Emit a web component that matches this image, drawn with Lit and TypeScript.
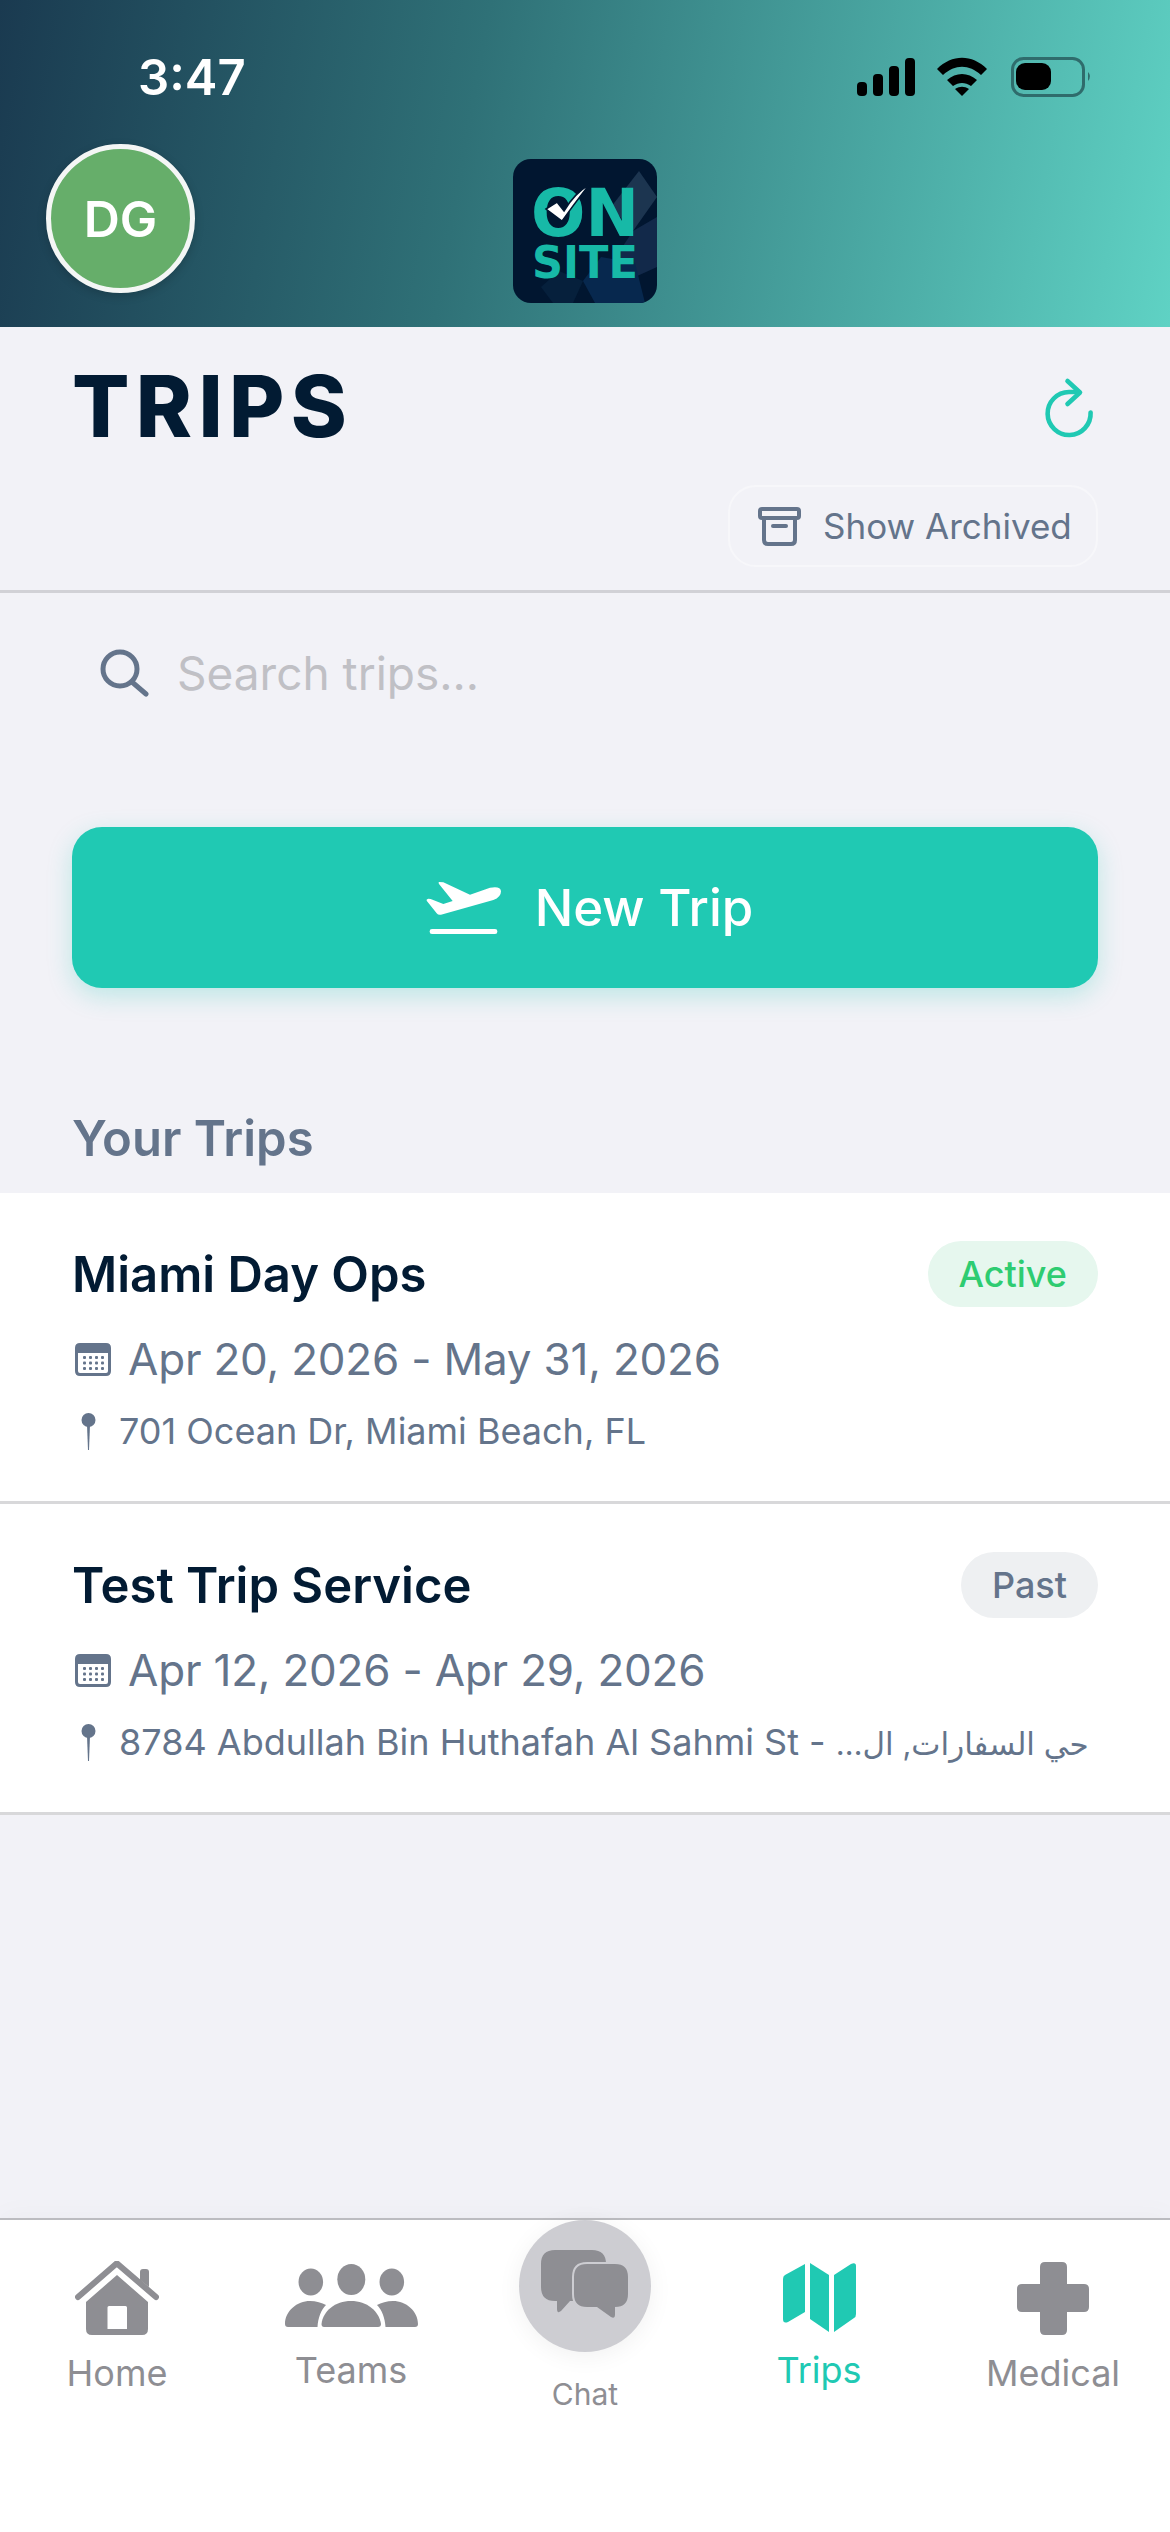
import { LitElement, html, css, svg } from "lit";
import { customElement } from "lit/decorators.js";

const TRIPS = [
  {
    name: "Miami Day Ops",
    status: "Active",
    dates: "Apr 20, 2026 - May 31, 2026",
    address: html`701 Ocean Dr, Miami Beach, FL`,
  },
  {
    name: "Test Trip Service",
    status: "Past",
    dates: "Apr 12, 2026 - Apr 29, 2026",
    address: html`8784 Abdullah Bin Huthafah Al Sahmi St - <span dir="rtl" class="rtl">حي السفارات, ال…</span>`,
  },
];

const ICONS = {
  home: svg`<svg class="ico" width="84" height="74" viewBox="0 0 84 74">
    <path d="M3 36 41 3a1.2 1.2 0 0 1 1.6 0L81 36" fill="none" stroke="currentColor" stroke-width="6" stroke-linecap="round"/>
    <path d="M65 19V11q0-3 3-3h3q3 0 3 3v15z" fill="currentColor"/>
    <path fill-rule="evenodd" d="M42 14 73 41V68q0 6-6 6H17q-6 0-6-6V41zM34 45q-1.500 0-1.500 1.500V68H52V46.500q0-1.500-1.500-1.500z" fill="currentColor"/>
  </svg>`,
  teams: svg`<svg class="ico" width="133" height="63" viewBox="0 0 133 63" fill="currentColor">
    <ellipse cx="66.300" cy="15.500" rx="14" ry="15.500"/>
    <ellipse cx="25.800" cy="18" rx="12.300" ry="13.500"/>
    <ellipse cx="106.800" cy="18" rx="12.300" ry="13.500"/>
    <path d="M36.500 60C38 47 50 37 66 37s28 10 30 23q0 3-3 3H39q-2.500 0-2.500-3z"/>
    <path d="M0 60C0 47 12 37 25 37c6 0 12 2 16 4-5 5-8 13-8.500 22H3q-3 0-3-3z"/>
    <path d="M133 60c0-13-12-23-25-23-6 0-12 2-16 4 5 5 8 13 8.500 22H130q3 0 3-3z"/>
  </svg>`,
  chat: svg`<svg width="132" height="132" viewBox="0 0 132 132">
    <path d="M36 30h37q14 0 14 14v23q0 14-14 14H51L42 91q-4 3-4-2v-8h-2q-14 0-14-14V44q0-14 14-14z" fill="currentColor"/>
    <path d="M68 44h28q13 0 13 13v17q0 13-13 13v8q0 4-4 2L78 87H68q-13 0-13-13V57q0-13 13-13z" fill="currentColor" stroke="#cdcdd2" stroke-width="4" paint-order="stroke"/>
  </svg>`,
  map: svg`<svg class="ico" width="73" height="69" viewBox="0 0 73 69" fill="currentColor">
    <path d="M22 1V49L5 59q-5 2-5-3V16q0-3 2-4z"/>
    <path d="M27 0 46 12V69L27 56z"/>
    <path d="M51 12 68 1q5-2 5 2V51q0 3-2 4L51 69z"/>
  </svg>`,
  medical: svg`<svg class="ico" width="72" height="73" viewBox="0 0 72 73">
    <path d="M28 0H45q5 0 5 5V22H67q5 0 5 5V45q0 5-5 5H50V68q0 5-5 5H28q-5 0-5-5V50H5q-5 0-5-5V27q0-5 5-5H23V5q0-5 5-5z" fill="currentColor"/>
  </svg>`,
};

const TABS = [
  { key: "home", label: "Home", icon: ICONS.home },
  { key: "teams", label: "Teams", icon: ICONS.teams },
  { key: "chat", label: "Chat", icon: ICONS.chat },
  { key: "trips", label: "Trips", icon: ICONS.map },
  { key: "medical", label: "Medical", icon: ICONS.medical },
];

@customElement("app-root")
export class AppRoot extends LitElement {
  static styles = css`
    :host {
      display: flex;
      flex-direction: column;
      min-height: 2532px;
      background: #f2f2f7;
      font-family: Inter, "DejaVu Sans", sans-serif;
      color: #64748b;
    }

    .top {
      height: 327px;
      background: linear-gradient(100deg, #1a3a50 0%, #2f7177 40%, #5fd2c4 100%);
      box-sizing: border-box;
    }
    .status {
      height: 144px;
      display: flex;
      justify-content: space-between;
      padding: 52px 78px 0 138px;
      box-sizing: border-box;
    }
    .clock {
      font-size: 49px;
      font-weight: 600;
      line-height: 52px;
      color: #fff;
    }
    .status svg {
      display: block;
      margin-top: 5px;
    }
    .brand {
      display: grid;
      grid-template-columns: 1fr auto 1fr;
      padding-left: 46px;
    }
    .avatar {
      width: 149px;
      height: 149px;
      box-sizing: border-box;
      border: 5px solid #f4f6f5;
      border-radius: 50%;
      background: #66ae6a;
      color: #fff;
      font-size: 50px;
      font-weight: 600;
      display: flex;
      align-items: center;
      justify-content: center;
      box-shadow: 0 3px 10px rgba(0, 0, 0, 0.18);
    }
    .logo {
      display: block;
      margin: 15px 0 0 -46px;
    }

    .head {
      padding: 30px 72px 23px;
      border-bottom: 3px solid #d1d1d6;
    }
    .title-row {
      display: flex;
      justify-content: space-between;
      align-items: center;
    }
    h1 {
      margin: 0;
      font-size: 85px;
      line-height: 100px;
      font-weight: 800;
      letter-spacing: 6.300px;
      color: #021b33;
    }
    .archive-row {
      display: flex;
      justify-content: flex-end;
      margin-top: 28px;
    }
    .archive {
      width: 370px;
      height: 82px;
      box-sizing: border-box;
      border: 2px solid #f7f7fa;
      border-radius: 28px;
      padding-left: 28px;
      display: flex;
      align-items: center;
      gap: 22px;
      font-size: 35px;
    }

    .search {
      display: flex;
      align-items: center;
      gap: 28px;
      margin: 48px 0 0 100px;
      height: 64px;
      font-size: 46px;
      color: #c0c0c5;
    }

    .new-trip {
      margin: 122px 72px 0;
      height: 161px;
      border-radius: 30px;
      background: #20c9b3;
      color: #fff;
      font-size: 51px;
      font-weight: 500;
      display: flex;
      align-items: center;
      justify-content: center;
      gap: 34px;
      box-shadow: 0 8px 24px rgba(32, 201, 179, 0.25);
    }

    h2 {
      margin: 121px 72px 24px;
      font-size: 49px;
      line-height: 60px;
      font-weight: 600;
      color: #64748b;
    }

    .card {
      background: #fff;
      border-bottom: 3px solid #d8d8da;
      padding: 48px 72px;
    }
    .card-head {
      display: flex;
      justify-content: space-between;
      align-items: center;
      height: 66px;
    }
    .name {
      font-size: 49px;
      font-weight: 600;
      color: #021b33;
    }
    .badge {
      height: 66px;
      box-sizing: border-box;
      padding: 0 31px;
      border-radius: 33px;
      font-size: 36px;
      font-weight: 500;
      line-height: 66px;
    }
    .badge.active {
      background: #e6f7ee;
      color: #2ecc71;
    }
    .badge.past {
      background: #eef0f2;
      color: #64748b;
    }
    .dates {
      display: flex;
      align-items: center;
      gap: 16px;
      height: 56px;
      margin: 24px 0 0 2px;
      font-size: 44px;
      letter-spacing: -0.2px;
    }
    .place {
      display: flex;
      align-items: center;
      gap: 23px;
      height: 44px;
      margin: 22px 0 0 9px;
      font-size: 36px;
      white-space: nowrap;
    }
    .dates svg,
    .place svg {
      flex: none;
    }
    .rtl {
      unicode-bidi: isolate;
      font-size: 31px;
    }

    nav {
      margin-top: auto;
      height: 314px;
      box-sizing: border-box;
      background: #fff;
      border-top: 2px solid #bcbcc0;
      padding-top: 41px;
      display: grid;
      grid-template-columns: repeat(5, 1fr);
      box-shadow: 0 -6px 24px rgba(0, 0, 0, 0.025);
    }
    .tab {
      display: flex;
      flex-direction: column;
      align-items: center;
      color: #8e8e93;
      font-size: 36px;
      line-height: 44px;
    }
    .tab .ico {
      display: block;
      margin-bottom: 16px;
    }
    .tab.teams .ico {
      margin-top: 3px;
      margin-bottom: 21px;
    }
    .tab.trips {
      color: #20c9b3;
    }
    .tab.trips .ico {
      margin-top: 2px;
    }
    .tab.medical .ico {
      margin-top: 1px;
    }
    .bubble {
      width: 132px;
      height: 132px;
      margin-top: -41px;
      border-radius: 50%;
      background: #cdcdd2;
      box-shadow: 0 4px 24px rgba(0, 0, 0, 0.06);
    }
    .bubble svg {
      display: block;
    }
    .tab.chat span {
      margin-top: 24px;
      font-size: 30px;
      line-height: 36px;
    }
  `;

  renderStatusIcons() {
    return html`<svg width="236" height="40" viewBox="855 58 236 40">
      <rect x="856" y="83" width="10" height="14" rx="4" />
      <rect x="872" y="75" width="10" height="22" rx="4" />
      <rect x="888" y="67" width="10" height="30" rx="4" />
      <rect x="904" y="59" width="10" height="38" rx="4" />
      <path d="M936 70C951 55 971 55 986 70l-6 6C968 65 954 65 942 76z" />
      <path d="M946 81c9-8 21-8 30 0l-6 6c-6-4-12-4-18 0z" />
      <path d="M954 90c5-3 9-3 14 0l-7 7z" />
      <rect x="1011.500" y="59.500" width="71" height="37" rx="11" fill="none" stroke="#2f6c6c" stroke-width="3" />
      <rect x="1015" y="64" width="35" height="27" rx="9" />
      <path d="M1087 73q4 4 0 9z" fill="#2f6c6c" />
    </svg>`;
  }

  renderLogo() {
    return html`<svg class="logo" width="144" height="144" viewBox="0 0 144 144">
      <defs>
        <clipPath id="logo-clip"><rect width="144" height="144" rx="18" /></clipPath>
      </defs>
      <g clip-path="url(#logo-clip)">
        <rect width="144" height="144" fill="#011630" />
        <path d="M126 12 144 38 120 72 98 48z" fill="#1c3550" />
        <path d="M120 72 144 58V108L122 118 104 96z" fill="#12294a" />
        <path d="M82 144 70 122 88 98 122 104 132 144z" fill="#07284e" />
        <path d="M40 144 28 128 46 112 70 122 60 144z" fill="#06203c" />
        <text x="18" y="77" font-family="DejaVu Sans" font-weight="700" font-size="66" fill="#17b9a7" textLength="108" lengthAdjust="spacingAndGlyphs">ON</text>
        <text x="19" y="119" font-family="DejaVu Sans" font-weight="700" font-size="45" fill="#17b9a7" textLength="106" lengthAdjust="spacingAndGlyphs">SITE</text>
        <path d="M33 50 44 43 51 52C58 40 67 31 77 25 67 37 57 51 49 62z" fill="#fff" stroke="#011630" stroke-width="1.500" />
      </g>
    </svg>`;
  }

  renderTrip(trip: (typeof TRIPS)[number]) {
    return html`<div class="card">
      <div class="card-head">
        <span class="name">${trip.name}</span>
        <span class="badge ${trip.status.toLowerCase()}">${trip.status}</span>
      </div>
      <div class="dates">
        <svg width="38" height="33" viewBox="0 0 38 33" fill="#64748b">
          <path fill-rule="evenodd" d="M6 0H32q5 0 5 5V28q0 5-5 5H6q-5 0-5-5V5q0-5 5-5zM4 10V28q0 2 2 2H32q2 0 2-2V10z" />
          <g>
            ${[0, 1, 2].map((row) =>
              [0, 1, 2, 3].map(
                (col) => svg`<rect x=${9 + col * 6} y=${13 + row * 5.5} width="3" height="3" rx="1" />`
              )
            )}
          </g>
        </svg>
        <span>${trip.dates}</span>
      </div>
      <div class="place">
        <svg width="15" height="37" viewBox="0 0 15 37" fill="#64748b">
          <circle cx="7.500" cy="7" r="7" />
          <path d="M6 12H9L8 37H7z" />
        </svg>
        <span>${trip.address}</span>
      </div>
    </div>`;
  }

  render() {
    return html`
      <header class="top">
        <div class="status">
          <span class="clock">3:47</span>
          ${this.renderStatusIcons()}
        </div>
        <div class="brand">
          <div class="avatar">DG</div>
          ${this.renderLogo()}
        </div>
      </header>

      <section class="head">
        <div class="title-row">
          <h1>TRIPS</h1>
          <svg width="58" height="65" viewBox="1040 375 58 65" fill="none" stroke="#20c9b3" stroke-width="4.600" stroke-linecap="round" stroke-linejoin="round">
            <path d="M1090.600 412.500A21.500 21.500 0 1 1 1069 392H1079" />
            <path d="M1067.500 381 1080 392.500 1067.500 404" />
          </svg>
        </div>
        <div class="archive-row">
          <div class="archive">
            <svg width="43" height="39" viewBox="0 0 43 39" fill="none" stroke="#64748b" stroke-width="4" stroke-linecap="round" stroke-linejoin="round">
              <rect x="2" y="2" width="39" height="9" rx="2" />
              <path d="M6 11V33q0 4 4 4H33q4 0 4-4V11" />
              <path d="M15 19H28" />
            </svg>
            <span>Show Archived</span>
          </div>
        </div>
      </section>

      <div class="search">
        <svg width="49" height="48" viewBox="0 0 49 48" fill="none" stroke="#64748b" stroke-width="5" stroke-linecap="round">
          <circle cx="20" cy="20" r="17" />
          <path d="M32 33 46 45" />
        </svg>
        <span>Search trips...</span>
      </div>

      <div class="new-trip">
        <svg width="84" height="55" viewBox="111 180 252 165" fill="#fff">
          <path d="M177 186 190 187 270 224 330 203Q362 197 363 214 363 232 340 240L183 284Q175 286 170 280L140 242Q138 237 145 236L152 237 190 252 218 243 177 192Q174 187 177 186Z" />
          <rect x="149" y="327" width="203" height="15" rx="7" />
        </svg>
        <span>New Trip</span>
      </div>

      <h2>Your Trips</h2>
      ${TRIPS.map((trip) => this.renderTrip(trip))}

      <nav>
        ${TABS.map(
          (tab) => html`<div class="tab ${tab.key}">
            ${tab.key === "chat" ? html`<div class="bubble">${tab.icon}</div>` : tab.icon}
            <span>${tab.label}</span>
          </div>`
        )}
      </nav>
    `;
  }
}
